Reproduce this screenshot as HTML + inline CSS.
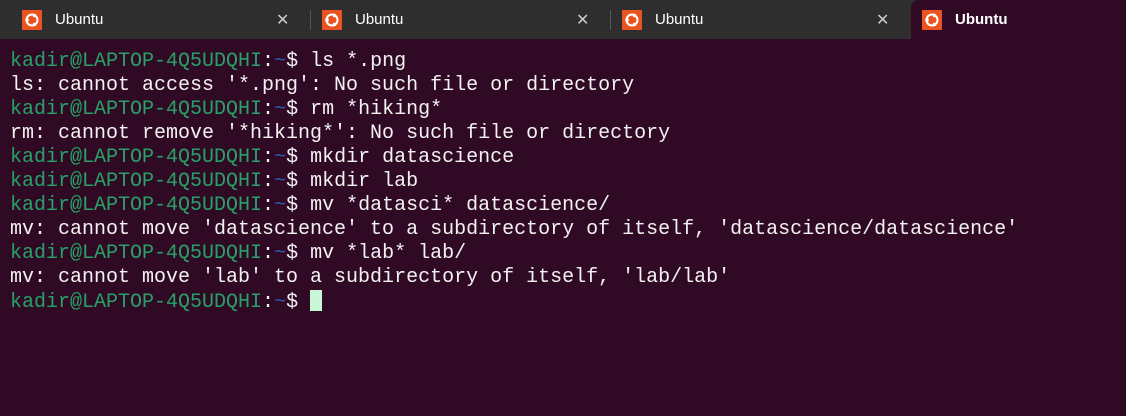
<!DOCTYPE html>
<html><head><style>
body{margin:0;width:1126px;height:416px;background:#300a24;overflow:hidden;font-family:"Liberation Sans",sans-serif}
.bar{position:absolute;left:0;top:0;width:1126px;height:39px;background:#2e2e2e}
.tab{position:absolute;top:0;height:39px;width:300px}
.ic{position:absolute;left:22px;top:10px;width:20px;height:20px;background:#e95420}
.ic svg{position:absolute;left:0;top:0}
.tt{position:absolute;left:55px;top:11px;color:#fff;font-size:15px}
.x{position:absolute;left:276px;top:10px;color:#ccc;font-size:16px}
.sep{position:absolute;top:10px;width:1px;height:20px;background:#555}
.act{position:absolute;left:911px;top:0;width:215px;height:39px;background:#300a24;border-top-left-radius:8px}
pre{position:absolute;left:10px;top:50px;margin:0;font-family:"Liberation Mono",monospace;font-size:20px;line-height:24px;color:#f2f2f2}
.g{color:#26a269}.b{color:#2a5cb8}
.cur{display:inline-block;width:12px;height:21px;background:#c8f7d8;vertical-align:-4px}
</style></head><body>
<div class="bar"></div>
<div class="tab" style="left:0"><div class="ic"><svg width="20" height="20"><circle cx="10" cy="10" r="5.5" fill="none" stroke="#fff" stroke-width="2"/><circle cx="5" cy="10" r="1.8" fill="#fff"/><circle cx="12.5" cy="5.5" r="1.8" fill="#fff"/><circle cx="12.5" cy="14.5" r="1.8" fill="#fff"/></svg></div><div class="tt">Ubuntu</div><div class="x">✕</div></div>
<div class="sep" style="left:310px"></div>
<div class="tab" style="left:300px"><div class="ic"><svg width="20" height="20"><circle cx="10" cy="10" r="5.5" fill="none" stroke="#fff" stroke-width="2"/><circle cx="5" cy="10" r="1.8" fill="#fff"/><circle cx="12.5" cy="5.5" r="1.8" fill="#fff"/><circle cx="12.5" cy="14.5" r="1.8" fill="#fff"/></svg></div><div class="tt">Ubuntu</div><div class="x">✕</div></div>
<div class="sep" style="left:610px"></div>
<div class="tab" style="left:600px"><div class="ic"><svg width="20" height="20"><circle cx="10" cy="10" r="5.5" fill="none" stroke="#fff" stroke-width="2"/><circle cx="5" cy="10" r="1.8" fill="#fff"/><circle cx="12.5" cy="5.5" r="1.8" fill="#fff"/><circle cx="12.5" cy="14.5" r="1.8" fill="#fff"/></svg></div><div class="tt">Ubuntu</div><div class="x">✕</div></div>
<div class="act"></div>
<div class="tab" style="left:900px"><div class="ic"><svg width="20" height="20"><circle cx="10" cy="10" r="5.5" fill="none" stroke="#fff" stroke-width="2"/><circle cx="5" cy="10" r="1.8" fill="#fff"/><circle cx="12.5" cy="5.5" r="1.8" fill="#fff"/><circle cx="12.5" cy="14.5" r="1.8" fill="#fff"/></svg></div><div class="tt" style="font-weight:bold">Ubuntu</div></div>
<pre><span class="g">kadir@LAPTOP-4Q5UDQHI</span>:<span class="b">~</span>$ ls *.png
ls: cannot access '*.png': No such file or directory
<span class="g">kadir@LAPTOP-4Q5UDQHI</span>:<span class="b">~</span>$ rm *hiking*
rm: cannot remove '*hiking*': No such file or directory
<span class="g">kadir@LAPTOP-4Q5UDQHI</span>:<span class="b">~</span>$ mkdir datascience
<span class="g">kadir@LAPTOP-4Q5UDQHI</span>:<span class="b">~</span>$ mkdir lab
<span class="g">kadir@LAPTOP-4Q5UDQHI</span>:<span class="b">~</span>$ mv *datasci* datascience/
mv: cannot move 'datascience' to a subdirectory of itself, 'datascience/datascience'
<span class="g">kadir@LAPTOP-4Q5UDQHI</span>:<span class="b">~</span>$ mv *lab* lab/
mv: cannot move 'lab' to a subdirectory of itself, 'lab/lab'
<span class="g">kadir@LAPTOP-4Q5UDQHI</span>:<span class="b">~</span>$ <span class="cur"></span></pre>
</body></html>
